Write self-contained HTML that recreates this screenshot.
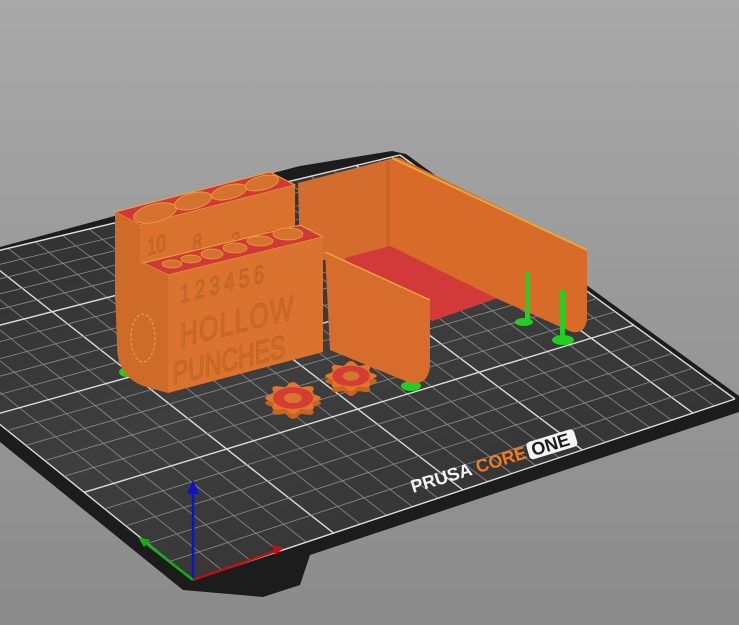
<!DOCTYPE html>
<html><head><meta charset="utf-8">
<style>
html,body{margin:0;padding:0;width:739px;height:625px;overflow:hidden;background:linear-gradient(#a9a9a9,#9a9a9a 45%,#8b8b8b);}
svg{position:absolute;left:0;top:0}
.emb{font-family:"Liberation Sans",sans-serif;fill:#d06c2a;stroke:#b55a1e;stroke-width:0.7}
</style></head><body>
<svg id="s" width="739" height="625" viewBox="0 0 739 625">
<defs>
<linearGradient id="bed" x1="0" y1="0" x2="1" y2="1">
<stop offset="0" stop-color="#2a2a2a"/><stop offset="0.5" stop-color="#3e3e3e"/><stop offset="1" stop-color="#2e2e2e"/>
</linearGradient>
</defs>
<polygon points="0,247 277,172 300,166 392,151 406,154 739,396 739,412 310,555 300,585 263,597 183,590 0,442" fill="#1c1c1c"/>
<polygon points="-167,290 400,155 735,399 193,580" fill="url(#bed)"/>
<g id="grid"></g>
<line x1="193" y1="580" x2="193" y2="492" stroke="#1010d0" stroke-width="2.5"/>
<polygon points="187,494 193,480 199,494" fill="#1010d0"/>
<line x1="193" y1="580" x2="143" y2="541" stroke="#10b010" stroke-width="2.5"/>
<polygon points="138,537 150,540 144,547" fill="#10b010"/>
<line x1="193" y1="580" x2="276" y2="551" stroke="#c01010" stroke-width="2.5"/>
<polygon points="284,548 272,545 275,555" fill="#c01010"/>
<g transform="translate(413,493) rotate(-17)" font-family="Liberation Sans,sans-serif" font-weight="bold" font-size="18">
<text x="0" y="0" fill="#f4f4f4">PRUSA</text>
<text x="68" y="0" fill="#f07b22">CORE</text>
<rect x="122" y="-15" width="50" height="18" rx="4" fill="#f4f4f4"/>
<text x="126" y="0" fill="#1c1c1c">ONE</text>
</g>
<ellipse cx="127" cy="372" rx="8" ry="5" fill="#20d020"/>
<ellipse cx="411" cy="386" rx="10" ry="5" fill="#20d020"/>
<ellipse cx="524" cy="322" rx="9" ry="4" fill="#20d020"/>
<ellipse cx="563" cy="340" rx="11" ry="5" fill="#20d020"/>
<polygon points="298,183 390,159 390,247 345,260 300,260" fill="#d36c2c"/>
<polygon points="345,258 390,246 498,298 432,321 345,272" fill="#d23a3a"/>
<path d="M390,159 Q396,156 402,159 L587,250 L587,318 Q586,334 572,332 L545,320 L500,300 L390,246 Z" fill="#d86a2a"/>
<line x1="392" y1="158" x2="587" y2="250" stroke="#e8a838" stroke-width="2"/>
<line x1="388" y1="162" x2="388" y2="246" stroke="#c86020" stroke-width="3"/>
<rect x="525" y="272" width="5" height="48" fill="#22d022"/>
<rect x="560" y="290" width="5" height="48" fill="#22d022"/>
<path d="M325,252 L430,300 L430,366 Q428,386 410,383 L330,350 Z" fill="#d86c2c"/>
<line x1="325" y1="252" x2="430" y2="300" stroke="#e8a838" stroke-width="1.5"/>
<polygon points="115,212 270,172 295,185 140,225" fill="#d23838" stroke="#e8a838" stroke-width="1"/>
<polygon points="140,225 295,185 295,250 140,290" fill="#d9722e"/>
<polygon points="115,212 140,225 140,300 115,300" fill="#cf6a28"/>
<g fill="#d57230" stroke="#e8a838" stroke-width="0.8">
<ellipse cx="155" cy="213" rx="22" ry="9" transform="rotate(-14 155 213)"/>
<ellipse cx="193" cy="201" rx="19" ry="8" transform="rotate(-14 193 201)"/>
<ellipse cx="229" cy="192" rx="18" ry="7" transform="rotate(-14 229 192)"/>
<ellipse cx="262" cy="183" rx="17" ry="7" transform="rotate(-14 262 183)"/>
</g>
<g class="emb" font-size="24" transform="skewY(-14) scale(0.7,1)">
<text x="210" y="292">10</text><text x="275" y="300">8</text><text x="330" y="308">3</text><text x="380" y="315">7</text>
</g>
<polygon points="143,263 300,225 323,237 168,275" fill="#d23838" stroke="#e8a838" stroke-width="1"/>
<polygon points="168,275 323,237 323,352 168,393" fill="#d9732f"/>
<path d="M115,290 L143,263 L168,275 L168,393 L150,388 Q117,380 117,345 Z" fill="#cf6b29"/>
<g fill="#d57230" stroke="#e8a838" stroke-width="0.7">
<ellipse cx="172" cy="264" rx="10" ry="4"/><ellipse cx="191" cy="259" rx="10" ry="4"/>
<ellipse cx="212" cy="254" rx="11" ry="5"/><ellipse cx="235" cy="248" rx="12" ry="5"/>
<ellipse cx="260" cy="241" rx="13" ry="5"/><ellipse cx="288" cy="234" rx="15" ry="6"/>
</g>
<ellipse cx="143" cy="338" rx="12" ry="24" fill="none" stroke="#e0a040" stroke-width="1.2" stroke-dasharray="3 2"/>
<g class="emb" transform="skewY(-14) scale(0.72,1)">
<text x="250" y="348" font-size="26" letter-spacing="6">123456</text>
<text x="250" y="392" font-size="34" letter-spacing="2">HOLLOW</text>
<text x="240" y="428" font-size="32">PUNCHES</text>
</g>
<g id="gears"></g>
</svg>
<script>
var NS="http://www.w3.org/2000/svg";
function L(a,b,c,d,col,w,p){var l=document.createElementNS(NS,"line");l.setAttribute("x1",a);l.setAttribute("y1",b);l.setAttribute("x2",c);l.setAttribute("y2",d);l.setAttribute("stroke",col);l.setAttribute("stroke-width",w);p.appendChild(l);}
var g=document.getElementById("grid");
var FL=[193,580],FR=[735,399],BR=[400,155],BL=[-167,290];
var wa=1.19,wb=1.3,W=[1,wa,wb,wa*wb];
function P(u,v){var c=[(1-u)*(1-v)*W[0],u*(1-v)*W[1],(1-u)*v*W[2],u*v*W[3]];var s=c[0]+c[1]+c[2]+c[3];
return[(c[0]*FL[0]+c[1]*FR[0]+c[2]*BL[0]+c[3]*BR[0])/s,(c[0]*FL[1]+c[1]*FR[1]+c[2]*BL[1]+c[3]*BR[1])/s];}
var NX=22,NY=20;
for(var i=0;i<=NX;i++){var u=i/NX;var a=P(u,0),b=P(u,1);var m=i%5==0||i==NX;L(a[0],a[1],b[0],b[1],m?"#dcdcdc":"#8c8c8c",m?1.4:0.8,g);}
for(var j=0;j<=NY;j++){var v=j/NY;var a=P(0,v),b=P(1,v);var m=j%5==0||j==NY;L(a[0],a[1],b[0],b[1],m?"#dcdcdc":"#8c8c8c",m?1.4:0.8,g);}
var gg=document.getElementById("gears");
function gear(cx,cy,r,ry){var d="",n=8,s=ry/r;for(var k=0;k<=n*8;k++){var ang=k/(n*8)*Math.PI*2;var rr=r*(0.87+0.13*Math.cos(ang*n));d+=(k?"L":"M")+(cx+rr*Math.cos(ang)).toFixed(1)+","+(cy+rr*Math.sin(ang)*s).toFixed(1);}return d+"Z";}
[[293,398,28,16],[351,376,26,15]].forEach(function(q){
var p=document.createElementNS(NS,"path");p.setAttribute("d",gear(q[0],q[1]+5,q[2],q[3]));p.setAttribute("fill","#c8621f");gg.appendChild(p);
p=document.createElementNS(NS,"path");p.setAttribute("d",gear(q[0],q[1],q[2],q[3]));p.setAttribute("fill","#e0762e");gg.appendChild(p);
var e=document.createElementNS(NS,"ellipse");e.setAttribute("cx",q[0]);e.setAttribute("cy",q[1]);e.setAttribute("rx",q[2]*0.72);e.setAttribute("ry",q[3]*0.68);e.setAttribute("fill","#d43c34");gg.appendChild(e);
e=document.createElementNS(NS,"ellipse");e.setAttribute("cx",q[0]);e.setAttribute("cy",q[1]);e.setAttribute("rx",q[2]*0.32);e.setAttribute("ry",q[3]*0.32);e.setAttribute("fill","#d9732f");gg.appendChild(e);});
</script>
</body></html>
